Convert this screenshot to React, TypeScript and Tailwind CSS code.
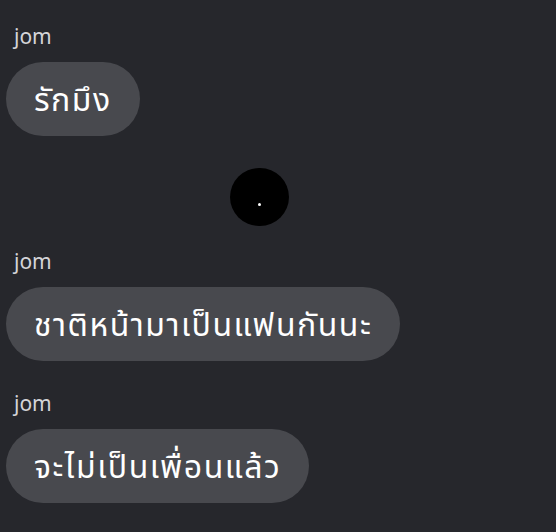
import React from 'react';

type Msg = { sender: string; text: string };

const font = { fontFamily: '"Noto Sans", "Noto Sans Thai", "DejaVu Sans", sans-serif' };

const Bubble: React.FC<Msg> = ({ sender, text }) => (
  <div className="flex flex-col items-start">
    <div className="pl-[8px] text-[21px] leading-[26px] text-[#d4d4d8]">{sender}</div>
    <div className="mt-[13px] h-[74px] flex items-center rounded-full bg-[#48494e] px-[28px] text-[32px] tracking-[1.5px] text-white">
      {text}
    </div>
  </div>
);

export default function App() {
  return (
    <div className="w-[556px] h-[532px] overflow-hidden bg-[#26272c] px-[6px] pt-[23px]" style={font}>
      <Bubble sender="jom" text="รักมึง" />

      {/* typing dot */}
      <div className="mt-[32px] pl-[224px]">
        <div className="w-[59px] h-[58px] rounded-full bg-black flex items-center justify-center">
          <div className="mt-[14px] w-[3px] h-[3px] rounded-full bg-white" />
        </div>
      </div>

      <div className="mt-[22px]">
        <Bubble sender="jom" text="ชาติหน้ามาเป็นแฟนกันนะ" />
      </div>
      <div className="mt-[29px]">
        <Bubble sender="jom" text="จะไม่เป็นเพื่อนแล้ว" />
      </div>
    </div>
  );
}
